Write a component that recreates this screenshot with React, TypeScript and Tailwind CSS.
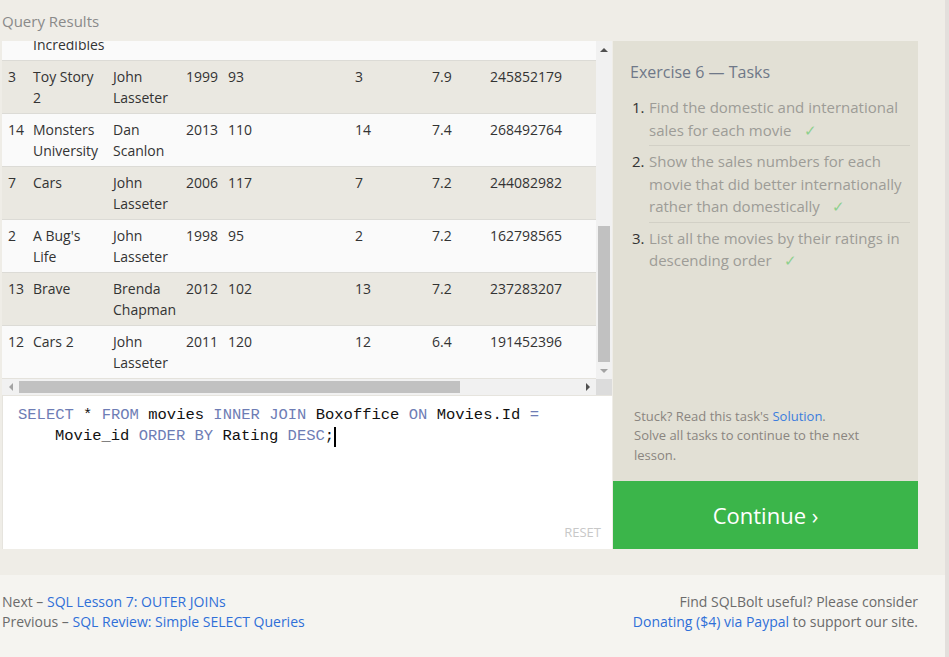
const rows = [
  { cells: ["5", ["The", "Incredibles"], ["Brad Bird"], "2004", "116", "5", "8.0", "261441092", "370001000"] },
  { cells: ["3", ["Toy Story", "2"], ["John", "Lasseter"], "1999", "93", "3", "7.9", "245852179", "239163000"] },
  { cells: ["14", ["Monsters", "University"], ["Dan", "Scanlon"], "2013", "110", "14", "7.4", "268492764", "475066843"] },
  { cells: ["7", ["Cars"], ["John", "Lasseter"], "2006", "117", "7", "7.2", "244082982", "217900167"] },
  { cells: ["2", ["A Bug's", "Life"], ["John", "Lasseter"], "1998", "95", "2", "7.2", "162798565", "200600000"] },
  { cells: ["13", ["Brave"], ["Brenda", "Chapman"], "2012", "102", "13", "7.2", "237283207", "301700000"] },
  { cells: ["12", ["Cars 2"], ["John", "Lasseter"], "2011", "120", "12", "6.4", "191452396", "368400000"] },
]

const widths = ["w-[25px]", "w-[80px]", "w-[73px]", "w-[42px]", "w-[127px]", "w-[77px]", "w-[58px]", "w-[110px]", "w-[110px]"]

const Cell = ({ value, width }: { value: string | string[]; width: string }) => {
  const lines = Array.isArray(value) ? value : [value]
  return (
    <div className={`${width} shrink-0 pl-[6px] whitespace-nowrap`}>
      {lines.map((l, i) => (
        <div key={i}>{l}</div>
      ))}
    </div>
  )
}

const Kw = ({ children }: { children: React.ReactNode }) => <span className="text-[#6e7db5]">{children}</span>

const tasks = [
  ["Find the domestic and international", "sales for each movie"],
  ["Show the sales numbers for each", "movie that did better internationally", "rather than domestically"],
  ["List all the movies by their ratings in", "descending order"],
]

const App = () => {
  return (
    <div className="flex min-h-[657px] bg-[#efede7] font-['Open_Sans',sans-serif]">
      <div className="flex-1 flex flex-col">
        <div className="h-[41px] pl-[2px] pt-[10px] text-[15px] leading-[22px] text-[#8a8a8a]">Query Results</div>
        <div className="flex pl-[2px] gap-[1px]">
          {/* left: results + editor */}
          <div className="w-[610px] flex flex-col">
            <div className="flex h-[338px]">
              <div className="w-[594px] h-[338px] overflow-hidden flex flex-col justify-end text-[14px] leading-[21px] text-[#333]">
                {rows.map((r, i) => (
                  <div
                    key={i}
                    className={`flex shrink-0 border-t border-[#dcdbd6] pt-[5px] pb-[5px] min-h-[53px] ${i % 2 === 1 ? "bg-[#eae8e1]" : "bg-[#fafafa]"}`}
                  >
                    {r.cells.map((c, j) => (
                      <Cell key={j} value={c} width={widths[j]} />
                    ))}
                  </div>
                ))}
                <div className="h-[1px] shrink-0 bg-[#e4e2dc]" />
              </div>
              {/* vertical scrollbar */}
              <div className="w-[16px] bg-[#f1f1f1] flex flex-col items-center">
                <div className="h-[17px] flex items-center justify-center">
                  <div className="w-0 h-0 border-l-[4px] border-r-[4px] border-b-[4px] border-l-transparent border-r-transparent border-b-[#505050]" />
                </div>
                <div className="flex-1" />
                <div className="w-[12px] h-[136px] bg-[#c1c1c1]" />
                <div className="h-[17px] flex items-center justify-center">
                  <div className="w-0 h-0 border-l-[4px] border-r-[4px] border-t-[4px] border-l-transparent border-r-transparent border-t-[#a3a3a3]" />
                </div>
              </div>
            </div>
            {/* horizontal scrollbar */}
            <div className="flex h-[16px]">
              <div className="w-[594px] bg-[#f1f1f1] flex items-center">
                <div className="w-[17px] flex items-center justify-center">
                  <div className="w-0 h-0 border-t-[4px] border-b-[4px] border-r-[4px] border-t-transparent border-b-transparent border-r-[#a3a3a3]" />
                </div>
                <div className="w-[441px] h-[12px] bg-[#c1c1c1]" />
                <div className="flex-1" />
                <div className="w-[17px] flex items-center justify-center">
                  <div className="w-0 h-0 border-t-[4px] border-b-[4px] border-l-[4px] border-t-transparent border-b-transparent border-l-[#505050]" />
                </div>
              </div>
              <div className="w-[16px] bg-[#dcdcdc]" />
            </div>
            {/* editor */}
            <div className="h-[154px] bg-white border-l border-t border-[#e6e4de] flex flex-col pl-[15px] pr-[11px] pt-[9px] pb-[7px]">
              <div className="font-['Liberation_Mono',monospace] text-[15.5px] leading-[21px] text-[#111]">
                <div>
                  <Kw>SELECT</Kw> * <Kw>FROM</Kw> movies <Kw>INNER</Kw> <Kw>JOIN</Kw> Boxoffice <Kw>ON</Kw> Movies.Id <Kw>=</Kw>
                </div>
                <div className="pl-[37px] flex items-center">
                  <span>
                    Movie_id <Kw>ORDER</Kw> <Kw>BY</Kw> Rating <Kw>DESC</Kw>;
                  </span>
                  <span className="inline-block w-[2px] h-[20px] bg-black" />
                </div>
              </div>
              <div className="mt-auto self-end text-[13px] text-[#c8c8c8]">RESET</div>
            </div>
          </div>
          {/* right: tasks */}
          <div className="w-[305px] flex flex-col">
            <div className="h-[440px] bg-[#e2e0d5] flex flex-col pt-[20px] pr-[8px] pb-[16px]">
              <div className="pl-[17px] text-[16px] leading-[22px] text-[#6f7888]">Exercise 6 — Tasks</div>
              <ol className="mt-[13px] text-[15px] leading-[22.5px]">
                {tasks.map((t, i) => (
                  <li key={i} className="flex">
                    <span className={`w-[36px] shrink-0 pl-[19px] text-[#333] ${i > 0 ? "pt-[5px]" : ""}`}>{i + 1}.</span>
                    <div className={`flex-1 text-[#9d9c97] pb-[4px] ${i > 0 ? "border-t border-[#d2d0c6] pt-[4px]" : ""}`}>
                      {t.map((line, j) => (
                        <div key={j}>
                          {line}
                          {j === t.length - 1 && <span className="ml-[12px] text-[#8ed08e]">✓</span>}
                        </div>
                      ))}
                    </div>
                  </li>
                ))}
              </ol>
              <div className="mt-auto pl-[21px] text-[13px] leading-[19.5px] text-[#8a8580]">
                <div>
                  Stuck? Read this task's <span className="text-[#3b7ddd]">Solution</span>.
                </div>
                <div>Solve all tasks to continue to the next</div>
                <div>lesson.</div>
              </div>
            </div>
            <div className="h-[68px] bg-[#3bb54a] flex items-center justify-center text-white text-[22px]">Continue ›</div>
          </div>
        </div>
        <div className="h-[26px]" />
        {/* footer */}
        <div className="flex-1 bg-[#f5f4f0] flex justify-between pl-[2px] pr-[27px] pt-[17px] text-[14px] leading-[20px] text-[#6b6b6b]">
          <div>
            <div>
              Next – <span className="text-[#2f6fd8]">SQL Lesson 7: OUTER JOINs</span>
            </div>
            <div>
              Previous – <span className="text-[#2f6fd8]">SQL Review: Simple SELECT Queries</span>
            </div>
          </div>
          <div className="text-right">
            <div>Find SQLBolt useful? Please consider</div>
            <div>
              <span className="text-[#2f6fd8]">Donating ($4) via Paypal</span> to support our site.
            </div>
          </div>
        </div>
      </div>
      <div className="w-[4px] bg-[#e3dfdc]" />
    </div>
  )
}

export default App
